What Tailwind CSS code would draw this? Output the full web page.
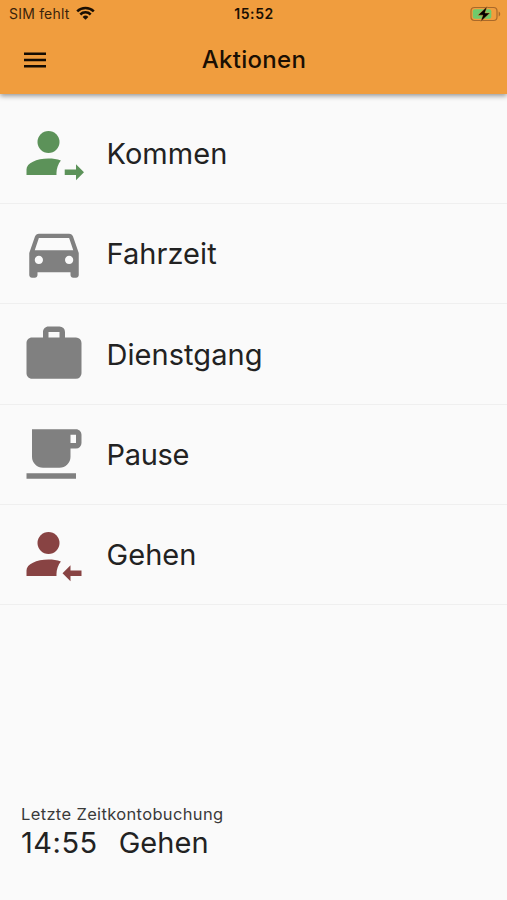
<!DOCTYPE html>
<html lang="de">
<head>
    <meta charset="UTF-8">
    <meta name="viewport" content="width=device-width, initial-scale=1.0">
    <title>Aktionen</title>
    <script src="https://cdn.jsdelivr.net/npm/@tailwindcss/browser@4"></script>
</head>
<body class="h-[900px] flex flex-col overflow-hidden bg-[#fafafa] font-['Inter',sans-serif] text-[#222222]">
    <header class="relative h-[94px] shrink-0 bg-[#f09d3e] text-[#1a0f03] shadow-[0_2px_5px_rgba(0,0,0,0.4)]">
        <!-- Status bar -->
        <div class="grid grid-cols-3 items-center h-7 pl-[9px] pr-[6px]">
            <div class="flex items-center gap-[6px]">
                <span class="text-[14px] leading-7 tracking-[0.2px] whitespace-nowrap text-[#3a230b]">SIM fehlt</span>
                <svg class="w-[19px] h-[14px] -mt-[2px]" viewBox="0 0 19 14" fill="none" stroke="currentColor" stroke-width="2.5">
                    <path d="M1.2 5.3a11.8 11.8 0 0 1 16.6 0" />
                    <path d="M4.3 8.5a7.4 7.4 0 0 1 10.4 0" />
                    <path d="M9.5 13.8l-2.9-2.9a4.1 4.1 0 0 1 5.8 0z" fill="currentColor" stroke="none" />
                </svg>
            </div>
            <span class="-ml-[2px] text-center text-[14px] leading-7 font-semibold tracking-[0.6px]">15:52</span>
            <svg class="w-[31px] h-[16px] -mt-px justify-self-end" viewBox="0 0 31 16">
                <rect x="1" y="1.5" width="26" height="13" rx="3.5" fill="none" stroke="#a9692a" stroke-width="1.2" />
                <rect x="2.8" y="3.3" width="18.5" height="9.4" rx="2" fill="#6fcb6c" />
                <path d="M28.7 5.5v5c2-.8 2-4.2 0-5z" fill="#a9692a" />
                <path d="M17.3 .3L7.8 9.2h5l-2.2 6.5L20 6.9h-5z" fill="#000" stroke="#f09d3e" stroke-width=".5" />
            </svg>
        </div>
        <!-- App bar -->
        <div class="grid grid-cols-3 items-center h-16 pl-[24px] pr-[23px]">
            <button type="button" aria-label="Menü" class="w-[22px]">
                <svg class="block w-[22px] h-[16px]" viewBox="0 0 22 16" fill="#150c02">
                    <path d="M0 .6h22v2.5H0zM0 6.8h22v2.5H0zM0 13h22v2.5H0z" />
                </svg>
            </button>
            <h1 class="text-center text-[24px] leading-8 font-medium tracking-[0.3px]">Aktionen</h1>
        </div>
    </header>

    <ul class="pt-[10px] text-[29px] tracking-[0.05px]">
        <li class="flex items-center h-[100px] pl-[20.5px] gap-[20px] border-b border-[#efefef]">
            <svg class="w-[66px] h-[66px] -mt-[2px] text-[#5c9259]" viewBox="0 0 24 24" fill="currentColor">
                <circle cx="10" cy="8" r="4" />
                <path d="M2 20v-2c0-2.3 3.6-4 8-4 1.6 0 3.1.2 4.5.7-1 1.3-1.6 2.9-1.6 4.6v.7z" />
                <path d="M20 16.1v1.9h-4.1v2H20v1.9l2.9-2.9z" />
            </svg>
            <span>Kommen</span>
        </li>
        <li class="flex items-center h-[100px] pl-[20.5px] gap-[20px] border-b border-[#efefef]">
            <svg class="w-[66px] h-[66px] -mt-px text-[#808080]" viewBox="0 0 24 24" fill="currentColor">
                <path d="M18.92 6.01C18.72 5.42 18.16 5 17.5 5h-11c-.66 0-1.21.42-1.42 1.01L3 12v8c0 .55.45 1 1 1h1c.55 0 1-.45 1-1v-1h12v1c0 .55.45 1 1 1h1c.55 0 1-.45 1-1v-8l-2.08-5.99zM6.5 16c-.83 0-1.5-.67-1.5-1.5S5.67 13 6.5 13s1.5.67 1.5 1.5S7.33 16 6.5 16zm11 0c-.83 0-1.5-.67-1.5-1.5s.67-1.5 1.5-1.5 1.5.67 1.5 1.5-.67 1.5-1.5 1.5zM5 11l1.5-4.5h11L19 11H5z" />
            </svg>
            <span>Fahrzeit</span>
        </li>
        <li class="flex items-center h-[101px] pl-[20.5px] gap-[20px] border-b border-[#efefef]">
            <svg class="w-[66px] h-[66px] -mt-px text-[#808080]" viewBox="0 0 24 24" fill="currentColor">
                <path d="M10 2h4a2 2 0 0 1 2 2v2h4a2 2 0 0 1 2 2v11a2 2 0 0 1-2 2H4c-1.11 0-2-.9-2-2V8c0-1.11.89-2 2-2h4V4c0-1.11.89-2 2-2m4 4V4h-4v2h4z" />
            </svg>
            <span class="pt-px">Dienstgang</span>
        </li>
        <li class="flex items-center h-[100px] pl-[20.5px] gap-[20px] border-b border-[#efefef]">
            <svg class="w-[66px] h-[66px] -mt-[2px] text-[#808080]" viewBox="0 0 24 24" fill="currentColor">
                <path d="M2 21h18v-2H2M20 8h-2V5h2m0-2H4v10a4 4 0 0 0 4 4h6a4 4 0 0 0 4-4v-3h2a2 2 0 0 0 2-2V5c0-1.11-.9-2-2-2z" />
            </svg>
            <span class="tracking-[-0.3px]">Pause</span>
        </li>
        <li class="flex items-center h-[100px] pl-[20.5px] gap-[20px] border-b border-[#efefef]">
            <svg class="w-[66px] h-[66px] -mt-[2px] text-[#884343]" viewBox="0 0 24 24" fill="currentColor">
                <circle cx="10" cy="8" r="4" />
                <path d="M2 20v-2c0-2.3 3.6-4 8-4 1.6 0 3.1.2 4.5.7-1 1.3-1.6 2.9-1.6 4.6v.7z" />
                <path d="M18 16.1v1.9h4v2h-4v1.9L15.1 19z" />
            </svg>
            <span>Gehen</span>
        </li>
    </ul>

    <footer class="mt-auto pl-[21px] pb-[39px]">
        <p class="text-[16.5px] leading-[22px] tracking-[0.35px] text-[#3a3a3a]">Letzte Zeitkontobuchung</p>
        <p class="flex gap-[21px] text-[29px] leading-[36px]">
            <span class="tracking-[0.5px]">14:55</span>
            <span class="tracking-[0.05px]">Gehen</span>
        </p>
    </footer>
</body>
</html>
